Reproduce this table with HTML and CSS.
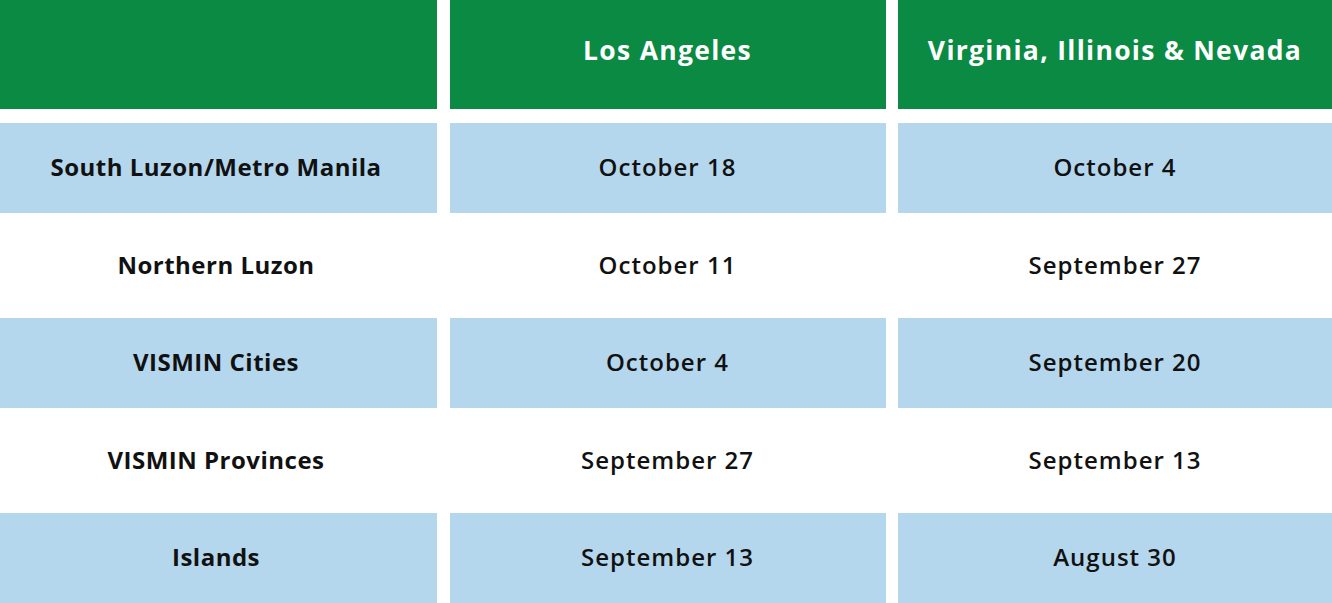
FILE: index.html
```html
<!DOCTYPE html>
<html lang="en">
<head>
<meta charset="utf-8">
<title>Schedule</title>
<link rel="stylesheet" href="styles.css">
</head>
<body>
<div class="table">
  <div class="cell head"></div>
  <div class="cell head">Los Angeles</div>
  <div class="cell head">Virginia, Illinois &amp; Nevada</div>

  <div class="cell label blue">South Luzon/Metro Manila</div>
  <div class="cell blue">October 18</div>
  <div class="cell blue">October 4</div>

  <div class="cell label white">Northern Luzon</div>
  <div class="cell white">October 11</div>
  <div class="cell white">September 27</div>

  <div class="cell label blue">VISMIN Cities</div>
  <div class="cell blue">October 4</div>
  <div class="cell blue">September 20</div>

  <div class="cell label white">VISMIN Provinces</div>
  <div class="cell white">September 27</div>
  <div class="cell white">September 13</div>

  <div class="cell label blue">Islands</div>
  <div class="cell blue">September 13</div>
  <div class="cell blue">August 30</div>
</div>
</body>
</html>
```
FILE: styles.css
```css
html, body {
  margin: 0;
  padding: 0;
  background: #ffffff;
}
body {
  width: 1332px;
  height: 603px;
  overflow: hidden;
  font-family: "Open Sans", "Liberation Sans", sans-serif;
}
.table {
  display: grid;
  grid-template-columns: 437px 436px 1fr;
  column-gap: 12.5px;
  row-gap: 0;
}
.cell {
  display: flex;
  align-items: center;
  justify-content: center;
  box-sizing: border-box;
  padding-bottom: 3px;
  text-align: center;
  color: #111111;
  font-size: 24px;
  font-weight: 600;
  letter-spacing: 1px;
}
.head {
  height: 109px;
  margin-bottom: 14px;
  padding-bottom: 10px;
  background: #0b8a43;
  color: #ffffff;
  font-size: 26.5px;
  font-weight: 700;
  letter-spacing: 1.3px;
}
.blue {
  height: 90px;
  background: #b4d7ee;
}
.white {
  height: 105px;
  background: #ffffff;
}
.label {
  padding-right: 5px;
  font-weight: 700;
  letter-spacing: 0.5px;
}
```
